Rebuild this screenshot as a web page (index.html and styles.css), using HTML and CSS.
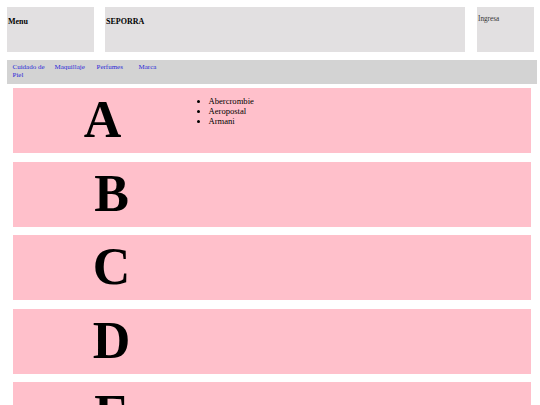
FILE: index.html
```html
<!DOCTYPE html>
<html lang="es">
<head>
<meta charset="utf-8">
<title>SEPORRA</title>
<link rel="stylesheet" href="styles.css">
</head>
<body>
<header class="header">
  <div class="box box-menu"><span class="title">Menu</span></div>
  <div class="box box-brand"><span class="title">SEPORRA</span></div>
  <div class="box box-login"><span class="login">Ingresa</span></div>
</header>
<nav class="nav">
  <a class="nav-link" href="#">Cuidado de Piel</a>
  <a class="nav-link" href="#">Maquillaje</a>
  <a class="nav-link" href="#">Perfumes</a>
  <a class="nav-link" href="#">Marca</a>
</nav>
<main class="rows">
  <section class="row">
    <div class="letter letter-narrow">A</div>
    <ul class="brands">
      <li>Abercrombie</li>
      <li>Aeropostal</li>
      <li>Armani</li>
    </ul>
  </section>
  <section class="row"><div class="letter">B</div></section>
  <section class="row"><div class="letter">C</div></section>
  <section class="row"><div class="letter">D</div></section>
  <section class="row"><div class="letter">E</div></section>
</main>
</body>
</html>
```
FILE: styles.css
```css
html, body {
  margin: 0;
  padding: 0;
  background: #ffffff;
  font-family: "Liberation Serif", "Times New Roman", serif;
  color: #000;
}

.header {
  display: flex;
  padding: 7px 0 0 7px;
}

.box {
  height: 45px;
  background: #e2e0e1;
  box-sizing: border-box;
  padding: 10px 0 0 1px;
}

.box-menu { width: 87px; }
.box-brand { width: 360px; margin-left: 11px; }
.box-login { width: 57px; margin-left: 12px; padding-top: 8px; }

.title {
  font-size: 8px;
  font-weight: bold;
  line-height: 10px;
  display: block;
}

.login {
  font-size: 7.2px;
  line-height: 9px;
  color: #333;
  display: block;
}

.nav {
  display: flex;
  margin: 8px 0 0 7px;
  width: 530px;
  height: 24px;
  box-sizing: border-box;
  padding: 4px 0 0 5.5px;
  background: #d3d3d3;
}

.nav-link {
  flex: 0 0 42px;
  width: 42px;
  padding-right: 4px;
  box-sizing: border-box;
  font-size: 7px;
  line-height: 7.6px;
  color: #2a2ad8;
  text-decoration: none;
}

.rows {
  display: flex;
  flex-direction: column;
  gap: 8.5px;
  margin: 4px 0 0 12.5px;
  width: 518.5px;
}

.row {
  display: flex;
  height: 65px;
  background: #ffc0cb;
  flex: 0 0 auto;
}

.letter {
  width: 198px;
  text-align: center;
  font-size: 52px;
  font-weight: bold;
  line-height: 1;
  padding-top: 6px;
}

.letter-narrow {
  width: 180px;
}

.brands {
  margin: 0;
  padding: 7.5px 0 0 16px;
  font-size: 8.6px;
  line-height: 10px;
  list-style: disc;
}
```
